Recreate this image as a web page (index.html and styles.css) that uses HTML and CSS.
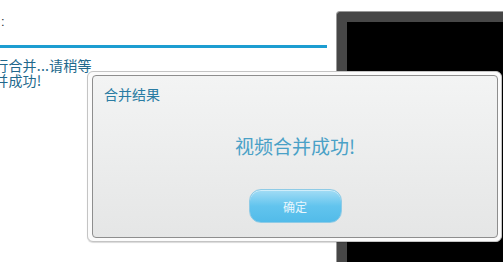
FILE: index.html
```html
<!DOCTYPE html>
<html lang="zh-CN">
<head>
<meta charset="utf-8">
<link rel="stylesheet" href="styles.css">
</head>
<body>
<div class="page">
  <div class="left">
    <div class="label">:</div>
    <div class="rule"></div>
    <div class="log">
      <div class="log-line">进行合并...请稍等</div>
      <div class="log-line">合并成功!</div>
    </div>
  </div>
  <div class="right">
    <div class="screen"></div>
  </div>
  <div class="dialog">
    <div class="dialog-inner">
      <div class="dialog-title">合并结果</div>
      <div class="dialog-msg">视频合并成功!</div>
      <button class="dialog-btn">确定</button>
    </div>
  </div>
</div>
</body>
</html>
```
FILE: styles.css
```css
html, body {
  margin: 0;
  padding: 0;
  background: #ffffff;
}
body {
  font-family: "Noto Sans CJK SC", "Liberation Sans", sans-serif;
}
.page {
  position: relative;
  display: flex;
  width: 503px;
  height: 262px;
  overflow: hidden;
  background: #ffffff;
}
.left {
  width: 337px;
  flex: none;
  display: flex;
  flex-direction: column;
}
.label {
  font-family: "Liberation Sans", sans-serif;
  font-size: 13px;
  line-height: 16px;
  color: #333;
  margin-top: 14px;
  padding-left: 1px;
  height: 16px;
}
.rule {
  margin-top: 15px;
  width: 327px;
  height: 3px;
  background: #1c9dd1;
}
.log {
  margin-top: 9px;
  margin-left: -20px;
  color: #21688c;
  font-size: 14px;
  line-height: 16px;
}
.log-line {
  white-space: nowrap;
  letter-spacing: 0.2px;
  height: 15px;
  overflow: visible;
}
.right {
  flex: 1;
  padding-top: 12px;
}
.screen {
  height: 300px;
  margin-right: -20px;
  background: #000;
  border-top: 10px solid #474747;
  border-left: 10px solid #474747;
  border-top-left-radius: 4px;
  box-shadow: -1px -1px 0 0 #9a9a9a;
}
.dialog {
  position: absolute;
  left: 87px;
  top: 71px;
  width: 415px;
  height: 171px;
  box-sizing: border-box;
  padding: 3px 3px 3px 4px;
  background: #fbfbfb;
  border: 1px solid #c4c4c4;
  border-radius: 6px;
  box-shadow: 0 1px 1px rgba(0,0,0,0.15);
}
.dialog-inner {
  height: 100%;
  box-sizing: border-box;
  border: 1px solid #8e8e8e;
  border-radius: 4px;
  background: linear-gradient(#f3f4f4, #e5e6e6);
  display: flex;
  flex-direction: column;
  align-items: center;
  padding-top: 10px;
}
.dialog-title {
  align-self: flex-start;
  padding-left: 11px;
  font-size: 14px;
  line-height: 16px;
  color: #2a7ca3;
}
.dialog-msg {
  margin-top: 32px;
  font-size: 19px;
  line-height: 24px;
  color: #4aa1c7;
}
.dialog-btn {
  margin-top: 31px;
  width: 93px;
  height: 34px;
  border: 1px solid #8fcbe6;
  border-radius: 12px;
  background: linear-gradient(#a3dcf5, #62c4ee 50%, #52bbe9);
  color: #eaf7fd;
  font-family: "Noto Sans CJK SC", sans-serif;
  font-size: 12px;
  padding: 0;
  box-shadow: inset 0 1px 0 rgba(255,255,255,0.5);
}
```
